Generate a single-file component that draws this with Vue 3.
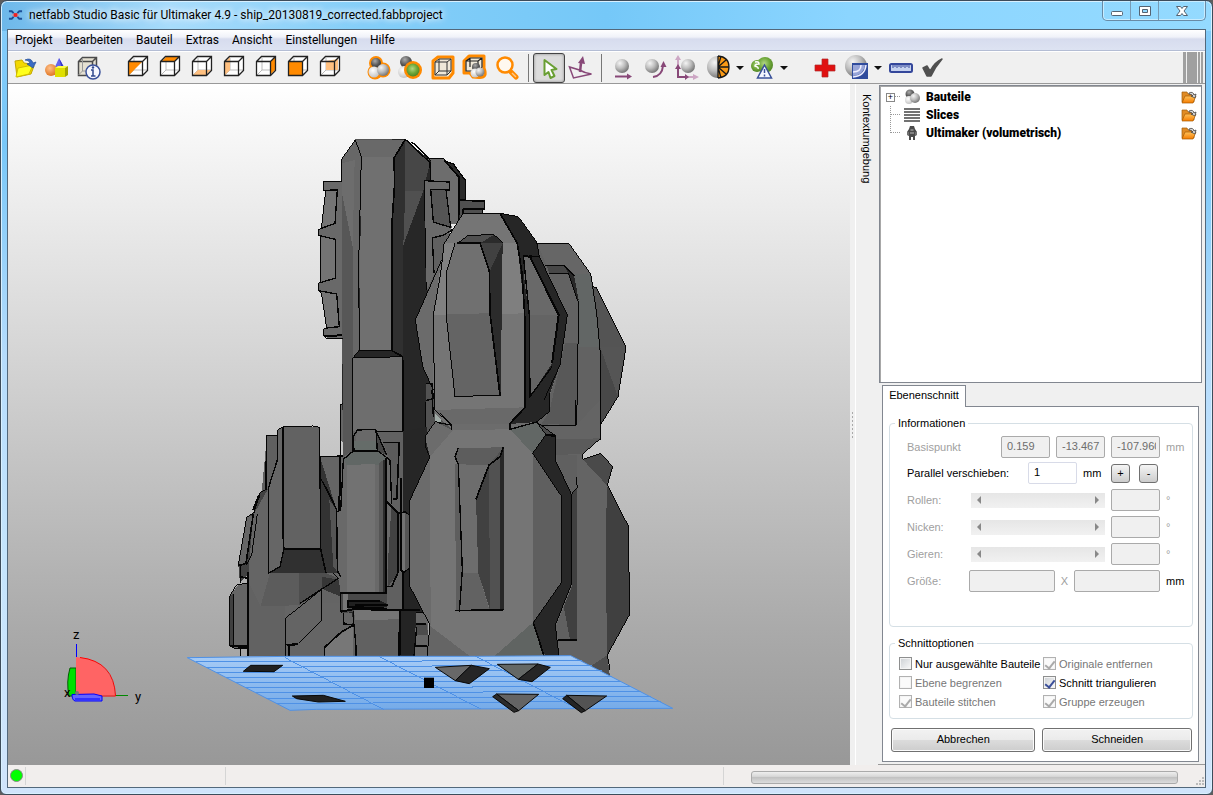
<script setup>
import { ref } from 'vue'

const menus = ['Projekt', 'Bearbeiten', 'Bauteil', 'Extras', 'Ansicht', 'Einstellungen', 'Hilfe']

const cubes = [
  { name: 'Isometrisch', fill: '#ff8a00', face: '7,10 20,10 7,23' },
  { name: 'Oben', fill: '#ff8a00', face: '7,10 12,5 25,5 20,10' },
  { name: 'Unten', fill: '#ffc080', face: '7,23 12,18 25,18 20,23' },
  { name: 'Links', fill: '#ffc080', face: '7,10 12,5 12,18 7,23' },
  { name: 'Rechts', fill: '#ff8a00', face: '20,10 25,5 25,18 20,23' },
  { name: 'Vorne', fill: '#ff8a00', face: '7,10 20,10 20,23 7,23' },
  { name: 'Hinten', fill: '#ffc080', face: '12,9 24,7 24,18 12,18' },
]

const rotations = ['Rollen', 'Nicken', 'Gieren']
const shift = ref('1')
const base = ['0.159', '-13.467', '-107.960']

const options = ref([
  { label: 'Nur ausgewählte Bauteile', checked: false, disabled: false },
  { label: 'Originale entfernen', checked: true, disabled: true },
  { label: 'Ebene begrenzen', checked: false, disabled: true },
  { label: 'Schnitt triangulieren', checked: true, disabled: false },
  { label: 'Bauteile stitchen', checked: true, disabled: true },
  { label: 'Gruppe erzeugen', checked: true, disabled: true },
])

const tree = ['Bauteile', 'Slices', 'Ultimaker (volumetrisch)']

// Each part of the model: origin in the scene, then faces as [points, fill] and edges as [points, weight].
const model = [
  {
    id: 'tower', at: [220, 130],
    faces: [
      ['310,156 366,154 369,626 315,622 310,598 320,594 304,488 295,482 295,460 302,456 302,320 295,314 295,300 304,295 317,182 310,180', '#696969'],
      ['317,182 352,180 345,280 304,295', '#747474'],
      ['302,322 346,328 346,444 302,458', '#747474'],
      ['304,486 350,490 358,592 320,594', '#747474'],
      ['361,824 370,820 370,940 361,930', '#666'],
      ['366,86 406,30 556,28 632,92 625,1580 369,1580', '#272727'],
      ['366,86 406,30 424,80 416,660 398,684 398,1200 369,1200', '#676767'],
      ['366,190 398,350 400,684 398,1200 369,1200', '#575757'],
      ['366,100 404,90 398,350 366,190', '#6d6d6d'],
      ['406,30 556,28 522,80 424,80', '#696969'],
      ['424,80 522,80 516,662 418,662', '#707070'],
      ['556,28 522,84 516,662 548,680 550,345 556,182', '#303030'],
      ['556,28 630,98 610,182 556,182', '#474747'],
      ['556,182 610,182 550,345', '#505050'],
      ['418,662 516,662 548,680 398,684', '#262626'],
      ['398,684 548,680 550,1110 398,1110', '#6e6e6e'],
      ['620,86 660,86 660,155 632,155 632,92', '#717171'],
      ['613,152 660,152 660,440 640,480 620,480', '#5c5c5c'],
    ],
    edges: [
      ['366,154 310,156 310,181 317,183 304,295 295,300 295,314 302,320 302,456 295,460 295,482 304,488 320,594 310,598 310,616 318,624 369,626', 3],
      ['310,181 352,180 345,280 304,295', 4], ['295,316 346,328 346,444 302,458', 4],
      ['295,482 350,492 358,590 320,594', 4], ['312,618 366,616', 6],
      ['366,154 366,86 406,30 424,80 416,400 418,662 398,684 398,1110', 3],
      ['556,28 522,84 524,160 516,280 516,662', 5], ['406,30 556,28', 2], ['556,28 630,98 632,155', 4],
      ['574,38 584,42 632,92', 4], ['418,662 516,662 548,680 550,1110', 5], ['398,684 548,680', 3],
      ['632,86 660,86', 3], ['660,152 613,152 620,480', 4], ['361,1000 361,824 370,820', 3],
    ],
  },
  {
    id: 'upper-pods', at: [400, 150],
    faces: [
      ['92,26 128,25 160,44 197,92 197,150 180,220 92,230', '#6d6d6d'],
      ['132,30 160,42 197,92 197,150 176,210 176,82', '#2a2a2a'],
      ['180,150 254,152 254,178 248,180 248,192 180,200', '#505050'],
      ['74,92 148,94 148,120 140,122 155,232 125,330 80,420', '#6a6a6a'],
      ['92,118 138,120 152,230 100,216', '#555'],
      ['97,262 160,250 130,330 100,370', '#606060'],
      ['78,700 95,700 110,790 160,830 155,870 76,870', '#525252'],
      ['105,790 124,800 124,818 105,818', '#a0aba6'],
      ['412,280 508,282 572,372 576,410 590,414 678,592 654,740 602,824 602,870 400,870', '#626262'],
      ['412,280 508,282 572,372 524,372 492,346 440,346', '#666'],
      ['524,372 572,372 582,415 600,592 536,592', '#626665'],
      ['590,414 678,592 600,590 578,412', '#545454'],
      ['600,590 678,592 654,740', '#555'],
      ['600,590 654,740 602,824', '#484848'],
      ['440,346 492,346 522,375 536,460 530,828 430,828', '#626262'],
      ['495,580 533,580 530,828 420,828 448,785', '#585858'],
      ['492,346 522,375 536,450 528,440 505,372', '#282828'],
      ['440,346 492,346 505,370 448,370', '#474747'],
      ['188,192 300,190 355,200 420,320 502,495 480,645 448,740 448,785 405,820 330,834 155,838 104,790 100,720 68,650 46,510 125,330 132,280', '#757575'],
      ['125,330 46,510 68,650 100,720 100,495', '#6b6b6b'],
      ['132,280 165,280 140,365 140,495 100,495', '#818181'],
      ['308,280 352,280 366,370 372,490 304,492', '#7f7f7f'],
      ['300,190 355,200 412,280 418,320 502,495 480,645 448,735 448,785 405,818 328,834 328,822 376,772 374,490 352,280', '#262626'],
      ['370,318 386,320 476,495 388,495 374,400', '#696969'],
      ['388,495 476,495 456,640 390,740', '#646464'],
      ['165,280 240,280 268,362 270,490 140,495 140,365', '#707070'],
      ['140,492 270,490 300,735 165,740', '#646464'],
      ['172,280 205,256 282,254 308,278 240,282', '#505050'],
      ['240,280 282,254 308,280 302,735 272,490 268,362', '#2b2b2b'],
      ['240,280 308,280 270,362', '#414141'],
      ['104,780 376,772 328,824 155,828', '#696969'],
    ],
    edges: [
      ['74,26 130,25 175,82 176,210', 3], ['132,32 160,42 197,92 197,150', 4], ['135,34 178,82 176,200', 5],
      ['180,150 254,154 254,178 190,178 188,192', 5], ['248,178 248,192', 4],
      ['74,92 148,96 148,120 92,118 100,216 152,232 138,120', 4],
      ['158,238 132,255 97,264 102,370', 4],
      ['188,192 300,190 355,200 410,276 418,320 502,495 480,645 432,750', 3],
      ['188,192 132,282 122,370 100,495 104,780 155,825 155,838', 3],
      ['125,330 46,510 68,650 100,720', 3],
      ['300,190 352,280 366,370 374,490 376,772 328,822 328,834 405,818', 5],
      ['370,316 388,495 390,740 456,650', 4], ['370,318 390,320 476,495 456,640', 6], ['386,318 420,320', 4],
      ['165,280 140,365 140,510 165,740 303,735', 3], ['172,280 205,256 282,254 308,278', 3],
      ['170,280 240,280 268,362 270,490 300,735', 5],
      ['412,280 508,282 572,372 578,410 590,414 678,592 654,740 602,824', 3],
      ['578,410 590,490 602,620 602,870', 3], ['436,346 492,346 523,378', 4],
      ['448,370 505,370 536,460 530,828 436,826', 3], ['448,730 448,785 405,820', 3],
      ['78,700 96,702 100,745 78,752', 4], ['120,790 155,825 108,818 76,860', 3],
      ['76,755 76,860', 4], ['96,720 100,800', 4],
    ],
  },
  {
    id: 'lower-left', at: [220, 400],
    faces: [
      ['141,106 172,106 172,180 145,265 125,277', '#606060'],
      ['120,278 145,265 150,450 85,520 60,550 55,495 80,352 102,338', '#424242'],
      ['80,352 100,345 78,490 55,495', '#666'],
      ['28,590 55,554 85,550 82,745 45,746 28,735', '#656565'],
      ['28,590 42,580 42,742 28,735', '#404040'],
      ['145,265 300,170 370,168 400,1000 400,770 86,770 86,510 100,345', '#656565'],
      ['87,550 122,618 195,618 195,770 87,770', '#626262'],
      ['122,618 150,520 238,520 236,616', '#5c5c5c'],
      ['238,520 320,520 355,535 310,568 236,616', '#4e4e4e'],
      ['305,530 362,540 362,608 305,608', '#363636'],
      ['304,170 370,168 370,420 350,330 318,262', '#656565'],
      ['300,170 350,330 355,520 320,520 302,470', '#333'],
      ['328,300 350,330 352,515 340,500', '#555'],
      ['173,90 190,80 192,445 180,500 145,520 145,265 172,180', '#666'],
      ['190,80 298,82 302,445 192,445', '#626262'],
      ['192,445 302,445 320,520 145,520 180,500', '#303030'],
      ['196,655 305,566 362,590 362,608 305,608 305,660 235,730 196,735', '#646464'],
      ['196,735 235,730 305,660 305,608 362,608 400,680 410,770 196,770', '#656565'],
      ['312,740 400,676 408,740 408,770 312,770', '#777'],
      ['400,94 550,94 550,770 400,770', '#616161'],
      ['490,128 540,128 530,300 520,300 510,180', '#5b5b5b'],
      ['550,94 620,80 625,150 570,300 570,340 550,520', '#262626'],
      ['500,300 536,340 536,515 505,560', '#424242'],
      ['536,335 556,335 590,365 593,490 550,520 536,510', '#555'],
      ['540,338 556,335 556,518 540,516', '#737373'],
      ['550,515 570,510 572,560 625,670 620,770 538,770 540,630 548,628', '#242424'],
      ['503,560 545,515 545,628 503,628', '#606060'],
      ['402,150 412,90 466,88 500,165 510,180 515,310 498,580 362,580 352,510 352,330 370,170', '#696969'],
      ['402,122 468,122 470,153 402,153', '#656c69'],
      ['466,90 500,165 470,153', '#444'],
      ['370,175 400,153 470,153 500,175 490,195 380,195', '#616765'],
      ['382,195 466,192 466,576 382,576', '#727272'],
      ['476,190 490,180 490,576 476,576', '#555'],
      ['490,180 500,180 500,576 490,576', '#2b2b2b'],
      ['362,580 500,580 500,625 362,640', '#494949'],
      ['370,582 385,582 385,628 370,632', '#777'],
      ['385,602 480,602 500,612 500,622 385,622', '#202020'],
      ['370,640 395,640 402,670 372,672', '#666'],
      ['402,630 540,626 538,770 408,770', '#616161'],
      ['402,630 540,626 540,658 405,660', '#757575'],
      ['588,638 612,638 625,670 625,770 584,770', '#666'],
      ['588,672 620,672 625,705 588,705', '#4c4c4c'],
    ],
    edges: [
      ['172,106 140,106 140,268 120,278 102,338 80,352 55,495 62,500 62,550', 3],
      ['140,106 138,268', 5], ['118,285 100,330', 7], ['100,342 78,490 55,497', 5], ['112,342 95,465 80,495', 3],
      ['85,550 50,554 28,590 28,735 45,746 82,745', 3], ['42,582 42,742', 3], ['85,515 84,770', 7], ['62,500 62,530 82,535', 5], ['30,738 80,740', 7], ['62,748 62,770', 4],
      ['172,180 173,90 190,80 278,78 298,82 302,445', 3], ['189,82 189,410 192,445 180,500 145,520 145,265 172,180', 4],
      ['192,447 302,447 318,520', 5], ['302,450 302,170 370,168', 4], ['360,170 358,330', 6],
      ['302,235 350,330 352,520', 4], ['318,262 350,330', 5],
      ['305,568 305,660 235,730 198,734', 3], ['305,568 196,655 196,770', 3], ['340,520 355,535 240,610', 4],
      ['200,735 235,733', 6], ['207,738 207,770', 4], ['400,676 365,695 314,742 314,770', 5],
      ['402,153 400,110 412,90 466,88 500,165', 4], ['370,178 400,153 474,153 510,180 515,312', 4],
      ['468,90 472,153', 4], ['498,175 498,580 362,580 362,635', 5], ['370,180 362,330 350,335 352,510 362,530', 4],
      ['470,94 550,94', 4], ['490,128 538,128 530,298 518,298', 5],
      ['543,235 543,510 550,515 550,628', 6], ['500,305 535,340 535,515 515,560 500,560', 5],
      ['536,340 556,335 590,365', 4], ['593,487 550,518', 4],
      ['480,602 384,604 384,620 500,626', 6], ['405,614 505,614', 6], ['362,635 400,628 600,630', 6],
      ['370,640 372,672 402,674 408,740 408,770', 4], ['400,632 400,650 410,770', 3], ['540,630 538,770', 7],
      ['588,638 612,638', 4], ['588,672 618,672', 6], ['588,739 622,739', 5], ['590,680 582,770', 4],
    ],
  },
  {
    id: 'lower-pods', at: [390, 400],
    faces: [
      ['475,72 558,76 632,0 632,115 578,162 578,178 632,160 668,200 652,255 716,380 718,645 652,765 660,830 490,800 480,100', '#646464'],
      ['498,118 632,115 578,162 495,165', '#5b5b5b'],
      ['578,178 632,160 668,200 650,255', '#4a4a4a'],
      ['650,255 716,380 718,645 652,765 648,560', '#404040'],
      ['500,165 562,165 562,720 505,720 497,680 520,615', '#606060'],
      ['545,285 562,262 562,720 540,718 520,615 545,550', '#404040'],
      ['600,800 652,765 660,835', '#4e4e4e'],
      ['136,65 186,90 186,72 360,72 440,66 498,108 496,180 544,285 545,560 497,680 508,780 110,780 120,675 60,560 60,300 120,170 105,110', '#6c6c6c'],
      ['120,170 190,90 360,88 428,160 428,668 300,780 255,780 120,678', '#757575'],
      ['60,300 120,170 122,675 60,560', '#6b6b6b'],
      ['360,88 440,66 468,104 428,160', '#626765'],
      ['428,160 514,288 514,548 428,668', '#5f5f5f'],
      ['120,678 255,780 110,780', '#656565'],
      ['428,668 475,780 300,780', '#606462'],
      ['440,66 498,108 466,104', '#4a4a4a'],
      ['428,160 466,104 498,108 495,178 545,285 545,550 496,675 508,780 470,780 428,668 514,548 514,288', '#272727'],
      ['203,144 340,142 330,170 297,195 205,193 195,170', '#5d5d5d'],
      ['205,193 297,195 258,298 265,520 298,628 206,634 217,510', '#6d6d6d'],
      ['217,518 265,518 298,628 206,634', '#626262'],
      ['195,193 205,193 217,510 206,634 198,634', '#5e5e5e'],
      ['297,195 340,142 342,630 298,628', '#515151'],
      ['297,195 300,628 265,520 258,298', '#414141'],
      ['330,170 342,142 342,630 330,630', '#272727'],
    ],
    edges: [
      ['186,90 186,76 136,65 105,110 108,145 120,170 60,300 60,560 120,675 110,780', 3],
      ['360,72 360,88 440,66', 4], ['428,160 514,288 514,548 430,668', 3], ['440,66 468,104 428,160', 3], ['430,668 466,780', 5],
      ['440,66 498,108 495,178 545,285 545,550 496,675 508,780', 3], ['466,104 498,108', 7],
      ['205,144 195,170 205,193 217,510 208,636', 4], ['340,142 330,170 297,195 258,298', 5],
      ['196,632 342,629', 5],
      ['452,76 558,76 558,0', 3], ['632,0 632,115 578,162 578,178 632,160 668,200 652,255 716,380 718,645 652,765 660,810', 3],
      ['545,282 562,262 558,230', 3], ['505,720 562,720', 4],
    ],
  },
]

const plates = [
  ['190,94 212,76 308,76 282,95', '#202020'],
  ['337,168 430,166 496,184 415,186 350,176', '#202020'],
  ['766,82 874,76 826,122', '#686868'], ['826,122 874,76 928,86 868,131', '#262626'],
  ['952,73 1074,72 1015,118', '#646866'], ['1015,118 1074,72 1111,82 1056,125', '#262626'],
  ['950,162 1076,163 1016,212', '#646464'], ['938,170 950,162 1016,212 1002,217', '#2b2b2b'],
  ['1160,166 1280,168 1216,212', '#535353'], ['1148,176 1160,166 1216,212 1204,218', '#242424'],
]
const gridRows = Array.from({ length: 9 }, (_, i) => {
  const y = 66 + i * 15.5
  const x = 22 + (y - 53) * 1.94
  return `M${x} ${y}H${x + 290}V${y - 2}H${x + 680}V${y - 4}H${1172 + (y - 48) * 1.9}`
})
</script>

<template>
  <div class="window">
    <header class="titlebar">
      <svg class="logo" viewBox="0 0 16 12" aria-hidden="true">
        <path d="M4 6H12" stroke="#e88" stroke-width="1" />
        <path d="M1 2H4L6 4M1 10H4L6 8M15 2H12L10 4M15 10H12L10 8" fill="none" stroke="#1d4f97" stroke-width="2" />
        <path d="M6 4h4v4H6z" fill="#f02020" />
      </svg>
      <h1>netfabb Studio Basic für Ultimaker 4.9 - ship_20130819_corrected.fabbproject</h1>
      <div class="controls">
        <button aria-label="Minimieren"><svg viewBox="0 0 16 14"><rect x="2.500" y="7.500" width="11" height="4" rx="1" fill="#fff" stroke="#556372" /></svg></button>
        <button aria-label="Maximieren"><svg viewBox="0 0 16 14"><path d="M2.500 2.500h11v9h-11zM5.500 5.500v3h5v-3z" fill="#fff" fill-rule="evenodd" stroke="#556372" /></svg></button>
        <button class="close" aria-label="Schließen"><svg viewBox="0 0 16 14"><path d="M2.500 2.500h4l1.500 2 1.500-2h4l-3.500 4.500 3.500 4.500h-4l-1.500-2-1.500 2h-4l3.500-4.500z" fill="#fff" stroke="#556372" /></svg></button>
      </div>
    </header>

    <div class="client">
      <svg class="defs" aria-hidden="true">
        <defs>
          <radialGradient id="ball" cx=".35" cy=".3" r=".75"><stop offset="0" stop-color="#f4f4f4" /><stop offset=".5" stop-color="#bdbdbd" /><stop offset="1" stop-color="#707070" /></radialGradient>
          <radialGradient id="white" cx=".4" cy=".35" r=".75"><stop offset="0" stop-color="#fff" /><stop offset="1" stop-color="#bcbcbc" /></radialGradient>
          <radialGradient id="dark" cx=".4" cy=".3" r=".75"><stop offset="0" stop-color="#aaa" /><stop offset=".6" stop-color="#555" /><stop offset="1" stop-color="#3b3b3b" /></radialGradient>
          <radialGradient id="green" cx=".45" cy=".4" r=".7"><stop offset="0" stop-color="#b2d785" /><stop offset=".5" stop-color="#6fa83a" /><stop offset="1" stop-color="#44771c" /></radialGradient>
          <radialGradient id="orange" cx=".4" cy=".35" r=".75"><stop offset="0" stop-color="#ffc08a" /><stop offset="1" stop-color="#dd6a12" /></radialGradient>
          <linearGradient id="sheet" x2="0" y2="1"><stop offset="0" stop-color="#a8ccf6" /><stop offset="1" stop-color="#74aae8" /></linearGradient>
          <linearGradient id="folder" x2="0" y2="1"><stop offset="0" stop-color="#ffc25a" /><stop offset="1" stop-color="#f57c00" /></linearGradient>
        </defs>
      </svg>

      <nav class="menubar"><button v-for="m in menus" :key="m">{{ m }}</button></nav>

      <div class="toolbar" role="toolbar">
        <button aria-label="Öffnen"><svg viewBox="0 0 32 32">
          <path d="M6 9l7-1 2 3 6 1 4 2-3 8-14 3z" fill="#f3d800" stroke="#c2a800" /><path d="M9 16l15-3-4 9-13 3z" fill="#ffff1c" stroke="#d2be00" />
          <path d="M16 8q6-3 8 3l3-1-3 6-6-4 3-1q-1-3-5-3z" fill="#3b6cc4" stroke="#244d96" stroke-width=".7" /></svg></button>
        <button aria-label="Primitive"><svg viewBox="0 0 32 32">
          <path d="M18 6l6 11H13z" fill="#6464ee" /><path d="M18 6l3 11h3z" fill="#3535c4" /><circle cx="10" cy="18" r="6" fill="url(#orange)" />
          <path d="M14 16h10v9H14z" fill="#dfdf00" /><path d="M14 16l3-2h10l-3 2z" fill="#ffff44" /><path d="M24 16l3-2v9l-3 2z" fill="#a4a400" /></svg></button>
        <button aria-label="Informationen"><svg viewBox="0 0 32 32">
          <path d="M5.500 9.500l4-4h14v14l-4 4h-14zM5.500 9.500h14v14M19.500 9.500l4-4" fill="#e5e0d2" stroke="#4b4b4b" stroke-width="1.500" />
          <path d="M9.500 6v13H23M9.500 19l-4 4" fill="none" stroke="#999" /><circle cx="20" cy="20" r="7" fill="#f6f8ff" stroke="#3a519a" stroke-width="1.500" />
          <path d="M18 18h2v6M18 24h4.500" fill="none" stroke="#31488f" stroke-width="1.500" /><circle cx="20" cy="15.500" r="1.200" fill="#31488f" /></svg></button>
        <i class="space"></i>
        <button v-for="c in cubes" :key="c.name" :aria-label="c.name"><svg viewBox="0 0 32 32">
          <path d="M7 10l5-5h13v13l-5 5H7z" fill="#fff" /><path d="M12 6v12H25M12 18L7 23" fill="none" stroke="#bbb" />
          <polygon :points="c.face" :fill="c.fill" /><path d="M6.500 9.500l5-5h14v14l-5 5h-14zM6.500 9.500h14v14M20.500 9.500l5-5" fill="none" stroke="#222" stroke-width="1.300" /></svg></button>
        <i class="space"></i>
        <button aria-label="Alle Bauteile"><svg viewBox="0 0 32 32">
          <g fill="#ff8a00"><circle cx="13" cy="11" r="7" /><circle cx="12" cy="20" r="7.500" /><circle cx="20" cy="18" r="7.500" /></g>
          <circle cx="13" cy="11" r="5" fill="url(#dark)" /><circle cx="11" cy="20" r="5.500" fill="url(#white)" /><circle cx="20" cy="18" r="6" fill="url(#ball)" /></svg></button>
        <button aria-label="Ausgewähltes Bauteil"><svg viewBox="0 0 32 32">
          <circle cx="11" cy="10" r="6" fill="url(#dark)" /><circle cx="9" cy="20" r="6" fill="url(#white)" /><circle cx="18" cy="18" r="9" fill="#ff8a00" /><circle cx="18" cy="18" r="6.500" fill="url(#green)" /></svg></button>
        <button aria-label="Plattform"><svg viewBox="0 0 32 32">
          <path d="M6 9l5-4h15v16l-4 5H6z" fill="#efe8d8" stroke="#ff8a00" stroke-width="3" stroke-linejoin="round" /><path d="M8 10l4-3h12v12l-4 4H8zM8 10h12v13M20 10l4-3M12 7v12h12M12 19l-4 4" fill="none" stroke="#333" /></svg></button>
        <button aria-label="Plattform und Bauteile"><svg viewBox="0 0 32 32">
          <path d="M5 9l5-5h15v12q4 10-5 9.500l-6-.5-3-4H5z" fill="#efe8d8" stroke="#ff8a00" stroke-width="3" stroke-linejoin="round" /><path d="M7 9l4-3h12v9l-3 4H7zM7 9h12v9M19 9l4-3M11 6v9" fill="none" stroke="#222" stroke-width="1.200" />
          <circle cx="17" cy="15" r="4" fill="url(#dark)" /><circle cx="16" cy="21" r="4.500" fill="url(#white)" /><circle cx="21" cy="20" r="4.500" fill="url(#ball)" /></svg></button>
        <button aria-label="Zoom"><svg viewBox="0 0 32 32"><path d="M20 20l5 5" stroke="#ff8a00" stroke-width="5" stroke-linecap="round" /><path d="M21 21l4 4" stroke="#ffc785" stroke-width="1.500" /><circle cx="14" cy="13" r="7.500" fill="#fff8ef" stroke="#ff8a00" stroke-width="2.500" /></svg></button>
        <i class="line"></i>
        <button class="active" aria-label="Auswählen"><svg viewBox="0 0 32 32"><path d="M11.500 7v15l4-3 2 6 4-2-3-6 5-1z" fill="#fff" stroke="#699f33" stroke-width="2" stroke-linejoin="round" /></svg></button>
        <button aria-label="Ausrichten"><svg viewBox="0 0 32 32"><path d="M4.500 15l4 11 18-4q-7-1-12-4z" fill="none" stroke="#884878" stroke-width="1.500" /><path d="M15 20l1-9" stroke="#884878" stroke-width="2.500" /><path d="M18 4l-5 7 7 1z" fill="#884878" /></svg></button>
        <i class="line second"></i>
        <button aria-label="Verschieben"><svg viewBox="0 0 32 32"><circle cx="15" cy="14" r="7" fill="url(#ball)" /><path d="M8 24.500h14" stroke="#884878" stroke-width="2" /><path d="M20 21.500l5 3-5 3z" fill="#884878" /></svg></button>
        <button aria-label="Drehen"><svg viewBox="0 0 32 32"><circle cx="13" cy="14" r="7" fill="url(#ball)" /><path d="M14 25q9-1 10-11" fill="none" stroke="#884878" stroke-width="2" /><path d="M24.500 9l3 6h-6z" fill="#884878" /></svg></button>
        <button aria-label="Skalieren"><svg viewBox="0 0 32 32"><path d="M7 16V6M14 25h9" stroke="#cda7c4" stroke-width="2" /><path d="M7 3l3 5H4zM22 22l6 3-6 3z" fill="#cda7c4" /><circle cx="17" cy="14" r="7" fill="url(#ball)" /><path d="M7 17v8h9" fill="none" stroke="#884878" stroke-width="2" /><path d="M7 12l3 5H4zM14 22l4 3-4 3z" fill="#884878" /></svg></button>
        <button aria-label="Reparieren"><svg viewBox="0 0 32 32"><circle cx="15" cy="15" r="11" fill="url(#ball)" /><path d="M15 4q11 1 11 11t-11 11z" fill="#f99916" /><path d="M15 4v22M15 15l8-7M15 15h11M15 15l8 7M15 15l3-11M15 15l3 11M15 4q11 1 11 11t-11 11" fill="none" stroke="#181818" stroke-width="1.300" /></svg></button>
        <button class="drop" aria-label="Weitere Reparaturen"></button>
        <button class="next" aria-label="Analyse"><svg viewBox="0 0 32 32"><circle cx="10" cy="14" r="6" fill="url(#green)" /><circle cx="18" cy="13" r="8" fill="url(#green)" /><path d="M8 10q4-1 4 2-4 0-4 2 4 1 3 3" fill="none" stroke="#fff" stroke-width="1.500" /><path d="M17.500 13l7 13H10.500z" fill="#f4f7ff" stroke="#3a519a" stroke-width="1.500" /><path d="M17.500 17v4M17.500 22.500v2" stroke="#3a519a" stroke-width="1.500" /></svg></button>
        <button class="drop" aria-label="Weitere Analysen"></button>
        <i class="space last"></i>
        <button aria-label="Medizin"><svg viewBox="0 0 32 32"><path d="M13 7h6v6h7v6h-7v6h-6v-6H6v-6h7z" fill="#e01010" stroke="#b02a2a" stroke-width=".7" /></svg></button>
        <button aria-label="Schneiden"><svg viewBox="0 0 32 32"><circle cx="15" cy="14" r="11" fill="url(#ball)" /><path d="M11 11h16v16H11z" fill="#304c9d" /><path d="M12 13h12q-1 10-12 11z" fill="#98a5d8" /><path d="M12 20q8 0 8-7M12 25q12-1 13-12" fill="none" stroke="#eef" stroke-width="1.500" /></svg></button>
        <button class="drop" aria-label="Weitere Schnitte"></button>
        <button class="next" aria-label="Messen"><svg viewBox="0 0 32 32"><rect x="5" y="12" width="22" height="8" rx="1.500" fill="#c6d2ef" stroke="#34479b" stroke-width="2" /><path d="M8 13v3M10 13v2M12 13v3M14 13v2M16 13v3M18 13v2M20 13v3M22 13v2M24 13v3" stroke="#34479b" /></svg></button>
        <button aria-label="Testen"><svg viewBox="0 0 32 32"><path d="M6 16l4-2 3 5q5-9 12-12-7 8-11 17h-4z" fill="#505050" stroke="#505050" stroke-width="1.500" stroke-linejoin="round" /></svg></button>
        <div class="grips"><i></i><i></i><i></i><i></i></div>
      </div>

      <main class="work">
        <section class="viewport" aria-label="3D-Ansicht">
          <svg viewBox="8 84 842 681" preserveAspectRatio="xMidYMid meet">
            <clipPath id="above"><path d="M8 84H850V765H621L572 656H8z" /></clipPath>
            <g clip-path="url(#above)" shape-rendering="crispEdges">
              <g v-for="part in model" :key="part.id" :transform="`translate(${part.at[0]} ${part.at[1]}) scale(.33333)`">
                <polygon v-for="(f, i) in part.faces" :key="'f' + i" :points="f[0]" :fill="f[1]" />
                <polyline v-for="(e, i) in part.edges" :key="'e' + i" :points="e[0]" fill="none" stroke="#050505" :stroke-width="e[1]" />
              </g>
            </g>
            <g transform="translate(180 640) scale(.33333)">
              <path d="M22 53L330 49H890L1172 47L1478 205L410 208L330 211z" fill="url(#sheet)" stroke="#4e91e6" stroke-width="3" />
              <g fill="none" stroke="#4e91e6" stroke-width="3" shape-rendering="crispEdges">
                <path v-for="g in gridRows" :key="g" :d="g" /><path d="M315 53L612 209M598 50L904 208M885 48L1190 206" />
              </g>
              <polygon v-for="p in plates" :key="p[0]" :points="p[0]" :fill="p[1]" stroke="#080808" stroke-width="3" />
              <path d="M732 113h30v31h-30z" />
            </g>
            <g class="axes">
              <path d="M76.500 644v13" stroke="#00f" /><path d="M115 695.500h13" stroke="#080" />
              <path d="M70 668h6v28h-7q-3-14 1-28z" fill="#00e000" stroke="#075a07" />
              <path d="M76 695v-38q37 3 39 38.500z" fill="#ff6464" /><path d="M80 657.500q34 4 35.500 38.500H101" fill="none" stroke="red" />
              <path d="M72 694.500l22-.500 8 2v5H75q-3-1-3-6.500z" fill="#6464ff" stroke="#00f" /><path d="M75 699h25" stroke="#00f" />
              <circle cx="77" cy="693" r="2" fill="#777" />
              <text x="73" y="639">z</text><text x="64" y="697">x</text><text x="135" y="701">y</text>
            </g>
          </svg>
        </section>

        <div class="splitter"><i></i></div>
        <div class="context"><span>Kontextumgebung</span></div>

        <aside>
          <ul class="tree">
            <li v-for="(t, i) in tree" :key="t">
              <span class="branch"><button v-if="i === 0" aria-label="Aufklappen">+</button></span>
              <svg class="node" viewBox="0 0 16 16" aria-hidden="true">
                <template v-if="i === 0"><circle cx="6" cy="5" r="4.500" fill="url(#dark)" /><circle cx="5" cy="11" r="4" fill="url(#white)" /><circle cx="11" cy="9" r="5" fill="url(#ball)" /></template>
                <path v-else-if="i === 1" d="M0 2H16M0 5H16M0 8H16M0 11H16M0 14H16" stroke="#444" stroke-width="1.500" />
                <template v-else><path d="M6 1h4l1 3 2 3v3l-2 1v4H9v-3H7v3H5v-4l-2-1V7l2-3z" fill="#4b4b4b" /><path d="M6.500 5h3M6 8h4" stroke="#bbb" /><path d="M4 7v3M12 7v3" stroke="#999" /></template>
              </svg>
              <strong>{{ t }}</strong>
              <button class="folder" :aria-label="t + ' öffnen'"><svg viewBox="0 0 16 14"><path d="M1 2h5l1 2h6v8H1z" fill="#e08b24" stroke="#9d5b0c" stroke-width=".7" /><path d="M4 6h11l-3 7H1z" fill="url(#folder)" stroke="#a75a00" stroke-width=".7" /><path d="M8 3q4-2 5 2l2-1-1 4-4-2h2q-1-2-4-2z" fill="#ddd" stroke="#444" stroke-width=".8" /></svg></button>
            </li>
          </ul>

          <div class="dock">
            <button class="tab">Ebenenschnitt</button>
            <form class="page" @submit.prevent>
              <fieldset class="info">
                <legend>Informationen</legend>
                <div class="row off">
                  <label class="grow" for="base0">Basispunkt</label>
                  <input v-for="(b, i) in base" :id="'base' + i" :key="i" class="num" :value="b" :aria-label="'Basispunkt ' + (i + 1)" disabled>
                  <span class="unit">mm</span>
                </div>
                <div class="row shift">
                  <label class="grow" for="shift">Parallel verschieben:</label>
                  <input id="shift" v-model="shift" class="num"><span class="mid">mm</span>
                  <span class="steps"><button type="button">+</button><button type="button">-</button></span><span class="unit"></span>
                </div>
                <div v-for="r in rotations" :key="r" class="row off">
                  <label class="name" :for="r">{{ r }}:</label>
                  <span class="scroll"><button type="button" disabled aria-label="Weniger"></button><input type="range" :aria-label="r" disabled><button type="button" class="more" disabled aria-label="Mehr"></button></span>
                  <input :id="r" class="num" disabled><span class="unit">°</span>
                </div>
                <div class="row off">
                  <label class="name size" for="width">Größe:</label>
                  <input id="width" class="dim" disabled><span>X</span><input class="dim" aria-label="Höhe" disabled><span class="unit on">mm</span>
                </div>
              </fieldset>
              <fieldset class="opts">
                <legend>Schnittoptionen</legend>
                <label v-for="o in options" :key="o.label" :class="{ off: o.disabled }"><input v-model="o.checked" type="checkbox" :disabled="o.disabled">{{ o.label }}</label>
              </fieldset>
              <div class="actions"><button type="button">Abbrechen</button><button>Schneiden</button></div>
            </form>
          </div>
        </aside>
      </main>

      <footer class="status">
        <i class="led"></i><i class="cell"></i><i class="cell fill"></i>
        <div class="progress"></div>
        <svg class="grip" viewBox="0 0 10 10" aria-hidden="true"><path d="M7 1h2M4 4h2M7 4h2M1 7h2M4 7h2M7 7h2" stroke="#bbb" stroke-width="2" /></svg>
      </footer>
    </div>
  </div>
</template>

<style>
html, body { margin: 0; background: #5d5d5d; }
</style>

<style scoped>
* { box-sizing: border-box; }
button { font: inherit; color: inherit; margin: 0; padding: 0; border: 0; background: none; }
svg { display: block; }
.defs { position: absolute; width: 0; height: 0; }
.window {
  height: 100vh; display: flex; flex-direction: column; padding: 0 6px 6px;
  border: 1px solid #3d4c5b; border-radius: 7px 7px 6px 6px; font: 11px "Liberation Sans", Arial, sans-serif; color: #000;
  background: linear-gradient(90deg, #6db8ea, #a8dcfb 14%, #84cef8 30%, #75c8f8 50%, #8bd5ff 70%, #94daff) top / 100% 30px no-repeat,
    linear-gradient(#86cdfb, #78c7f8 18%, #b6dcfc 45%, #c5e5fd 70%, #d0e4fb);
  box-shadow: inset 0 0 0 1px #d8f0ff;
}
.titlebar { flex: none; height: 28px; display: flex; align-items: center; gap: 6px; padding-left: 1px; }
.logo { width: 15px; height: 12px; }
h1 { margin: 0; flex: 1; font: 12px Roboto, "Noto Sans", sans-serif; text-shadow: 0 0 8px #fff, 0 0 6px #fff; }
.controls { display: flex; align-self: flex-start; border: 1px solid #688ba6; border-top: 0; border-radius: 0 0 5px 5px; box-shadow: inset 0 0 0 1px #c8ecff; }
.controls button { width: 28px; height: 19px; display: grid; place-items: center; border-right: 1px solid #779bb5; }
.controls button.close { width: 46px; border: 0; }
.controls svg { width: 16px; height: 14px; }
.client { flex: 1; min-height: 0; display: flex; flex-direction: column; border: 1px solid #53687b; background: #f0f0f0; }
.menubar { flex: none; height: 21px; display: flex; gap: 13px; padding: 0 7px; border-bottom: 1px solid #b4bdd4; background: linear-gradient(#fff, #f0f2f9 35%, #d7dcee 45%, #dde3f2); font: 12px Roboto, "Noto Sans", sans-serif; }
.toolbar { flex: none; height: 33px; display: flex; align-items: center; padding-left: 1px; border-top: 1px solid #fff; border-bottom: 1px solid #999; background: #f0f0f0; overflow: hidden; }
.toolbar button { flex: none; width: 32px; height: 32px; }
.toolbar button.active { height: 30px; border: 1px solid #444; border-radius: 3px; background: #dcdcdc; box-shadow: inset 0 0 3px #888; }
.active svg { margin: -1px; }
.toolbar svg { width: 32px; height: 32px; }
.space { flex: none; width: 17px; }
.space.last { width: 20px; }
.line { flex: none; width: 1px; height: 28px; margin: 0 4px 0 5px; background: #777; }
.line.second { margin: 0 5px 0 4px; }
.toolbar .drop { width: 10px; display: grid; place-items: center; }
.drop::after { content: ""; border: 4px solid transparent; border-top-color: #111; border-bottom: 0; }
.next { margin-left: 2px; }
.grips { margin-left: auto; align-self: stretch; display: flex; gap: 1px; padding-right: 2px; }
.grips i { width: 3px; background: #a0a0a0; }
.grips i:nth-child(2) { width: 10px; }
.grips i:nth-child(n+3) { width: 2px; }

.work { flex: 1; min-height: 0; display: flex; }
.viewport { flex: 1; min-width: 0; background: linear-gradient(#fff, #ddd 32%, #aaa 80%, #989898); }
.viewport svg { width: 100%; height: 100%; }
.axes { font: 13px Roboto, "Noto Sans", sans-serif; }
.splitter { width: 6px; display: grid; place-items: center; border-right: 1px solid #fff; }
.splitter i { width: 3px; height: 28px; background: radial-gradient(circle, #aaa 1px, transparent 1px) 0 0 / 3px 4px; }
.context { width: 22px; padding: 10px 4px; }
.context span { writing-mode: vertical-rl; line-height: 14px; }
aside { width: 327px; display: flex; flex-direction: column; padding: 1px 3px 2px 1px; border-bottom: 1px solid #999; }
.tree { flex: 1; margin: 0; padding: 2px 4px 3px 3px; list-style: none; background: #fff; border: 1px solid #828790; box-shadow: inset 1px 1px #a8a8a8; font: bold 12px Roboto, "Open Sans", sans-serif; }
.tree li { display: flex; align-items: center; height: 18px; }
.branch { width: 17px; height: 18px; margin-right: 4px; display: flex; align-items: center; background: repeating-linear-gradient(#999 0 1px, #fff 1px 2px) 7px 0 / 1px 100% no-repeat, repeating-linear-gradient(90deg, #999 0 1px, #fff 1px 2px) 8px 8px / 9px 1px no-repeat; }
.tree li:first-child .branch { background-size: 1px 0, 9px 1px; }
.tree li:last-child .branch { background-size: 1px 50%, 9px 1px; }
.branch button { width: 9px; height: 9px; margin-left: 3px; border: 1px solid #888; background: #fff; font: 9px/6px "Liberation Sans", sans-serif; }
.node { width: 16px; height: 16px; margin-right: 6px; }
.tree strong { flex: 1; }
.folder svg { width: 16px; height: 14px; }
.dock { margin: 2px 3px 0; }
.tab { position: relative; display: block; width: 84px; height: 22px; padding-bottom: 3px; border: 1px solid #828790; border-bottom: 0; background: #fff; }
.page { margin-top: -1px; padding: 9px 5px 9px 6px; border: 1px solid #828790; background: #fff; }
fieldset { min-width: 0; margin: 0; border: 1px solid #d5dfe5; border-radius: 4px; }
legend { padding: 0 3px; line-height: 14px; }
.info { display: flex; flex-direction: column; gap: 5px; height: 211px; padding: 6px 4px 0 17px; }
.info legend { margin-left: -12px; }
.opts legend { margin-left: -4px; }
.row { display: flex; align-items: center; height: 22px; gap: 6px; }
.shift { margin-top: -1px; }
.off { color: #a0a0a0; }
.grow { flex: 1; white-space: nowrap; }
input { font: inherit; color: #000; border: 1px solid #d8dbe8; border-radius: 2px; background: #fff; margin: 0; padding: 0 3px 2px 5px; height: 22px; min-width: 0; }
input:disabled { background: #f0f0f0; border-color: #aaa; color: #6d6d6d; }
.num { width: 49px; flex: none; }
.unit { width: 22px; flex: none; }
.on { color: #000; }
.mid { width: 22px; }
.steps { display: flex; gap: 9px; width: 49px; }
.steps button { width: 19px; height: 19px; border: 1px solid #707070; border-radius: 3px; background: linear-gradient(#f5f5f5, #ccc); }
.name { flex: 1; }
.scroll { width: 134px; height: 15px; display: flex; background: linear-gradient(#e6e6e6, #f1f1f1); }
.scroll button { width: 16px; display: grid; place-items: center; }
.scroll button::before { content: ""; border: 4px solid transparent; border-right-color: #888; border-left: 0; }
.scroll .more::before { border: 4px solid transparent; border-left-color: #888; border-right: 0; }
.scroll input { flex: 1; height: 15px; appearance: none; border: 0; background: none; padding: 0; }
.scroll input::-webkit-slider-thumb { appearance: none; width: 0; }
.dim { width: 86px; }
.opts { display: grid; grid-template-columns: 144px 1fr; margin-top: 9px; padding: 4px 4px 7px 9px; height: 83px; }
.opts label { display: flex; align-items: center; height: 19px; gap: 3px; white-space: nowrap; }
.opts .off { color: #777; }
.opts input { appearance: none; width: 13px; height: 13px; flex: none; padding: 0; border: 1px solid #8e8f8f; border-radius: 0; background: linear-gradient(135deg, #ccd0d4, #fafafa); box-shadow: inset 0 0 0 1px #f4f4f4; display: grid; place-items: center; }
.opts input:disabled { border-color: #b1b1b1; background: #fafafa; }
.opts input:checked::after { content: ""; width: 4px; height: 8px; border: solid #3b4f9a; border-width: 0 2px 2px 0; transform: rotate(38deg); }
.opts input:disabled:checked::after { border-color: #aaa; }
.actions { display: grid; grid-template-columns: 144fr 149fr; gap: 7px; padding: 9px 1px 0 2px; }
.actions button { height: 24px; padding-bottom: 2px; border: 1px solid #707070; border-radius: 3px; background: linear-gradient(#f2f2f2, #ebebeb 48%, #dcdcdc 50%, #cdcdcd); box-shadow: inset 0 0 0 1px #fbfbfb; }

.status { flex: none; height: 22px; display: flex; align-items: center; background: #f1eeed; }
.led { width: 13px; height: 13px; margin: 0 2px 1px 2px; border: 1px solid #888; border-radius: 50%; background: #0f0; }
.cell { width: 200px; height: 18px; border-left: 1px solid #d5d5d5; }
.cell:nth-child(2) { flex: none; }
.fill { flex: 1; border-right: 1px solid #d5d5d5; }
.progress { width: 427px; height: 13px; margin: 2px 17px 0 27px; border: 1px solid #aaa; border-radius: 3px; background: linear-gradient(#eee, #d8d8d8 40%, #c2c2c2 50%, #dcdcdc); }
.grip { width: 10px; height: 10px; align-self: flex-end; }
</style>
